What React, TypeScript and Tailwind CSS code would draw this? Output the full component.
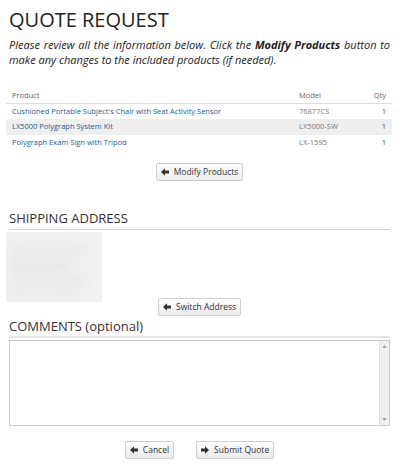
import React from "react";

const font = { fontFamily: '"Open Sans", "Liberation Sans", sans-serif' };

function ArrowIcon({ dir }: { dir: "left" | "right" }) {
  return (
    <svg width="8" height="8" viewBox="0 0 8 8" className={dir === "right" ? "rotate-180" : ""}>
      <path d="M0 4 L4 0.3 L4 2.6 L8 2.6 L8 5.4 L4 5.4 L4 7.7 Z" fill="#333" />
    </svg>
  );
}

function Btn({ label, dir = "left" }: { label: string; dir?: "left" | "right" }) {
  return (
    <button className="flex items-center gap-[5px] h-[18px] px-[4px] border border-[#cfcfcf] rounded-[2px] bg-gradient-to-b from-white to-[#ebebeb] text-[8.5px] text-[#333] leading-none">
      <ArrowIcon dir={dir} />
      {label}
    </button>
  );
}

const items = [
  { name: "Cushioned Portable Subject's Chair with Seat Activity Sensor", model: "76877CS", qty: 1 },
  { name: "LX5000 Polygraph System Kit", model: "LX5000-SW", qty: 1 },
  { name: "Polygraph Exam Sign with Tripod", model: "LX-1595", qty: 1 },
];

export default function App() {
  return (
    <div className="bg-white w-[400px] h-[468px] overflow-hidden pl-[9px] pr-[10px] pt-[6px] text-[#222]" style={font}>
      {/* heading */}
      <h1 className="text-[20px] leading-[27px] font-normal">QUOTE REQUEST</h1>
      <p className="mt-[4px] italic text-[11px] leading-[15px] text-justify text-[#222]">
        Please review all the information below. Click the <b>Modify Products</b> button to make any changes to the included products (if needed).
      </p>

      {/* products */}
      <table className="-mx-[3px] w-[386px] mt-[21px] text-[7.5px] border-collapse">
        <thead>
          <tr className="border-b border-[#ddd] text-[#666]">
            <th className="text-left font-normal px-[6px] h-[15px]">Product</th>
            <th className="text-left font-normal px-[6px] w-[59px]">Model</th>
            <th className="text-right font-normal px-[6px] w-[40px]">Qty</th>
          </tr>
        </thead>
        <tbody>
          {items.map((it, i) => (
            <tr key={it.model} className={i % 2 === 1 ? "bg-[#efefef]" : ""}>
              <td className="px-[6px] h-[16px] text-[#1e5a97]">{it.name}</td>
              <td className="px-[6px] text-[#777] whitespace-nowrap">{it.model}</td>
              <td className="px-[6px] text-right text-[#555]">{it.qty}</td>
            </tr>
          ))}
        </tbody>
      </table>

      <div className="flex justify-center mt-[12px]">
        <Btn label="Modify Products" />
      </div>

      {/* shipping */}
      <h2 className="mt-[28px] text-[13px] leading-[18px] text-[#333] border-b border-[#d5d5d5] pb-[2px]">SHIPPING ADDRESS</h2>
      <div className="-ml-[3px] mt-[2px] w-[96px] h-[70px] bg-[#f2f2f2] overflow-hidden flex flex-col gap-[6px] pt-[12px] pl-[4px]">
        <div className="w-[80px] h-[10px] bg-[#e9e9e9] blur-[6px]" />
        <div className="w-[60px] h-[10px] bg-[#e6e6e6] blur-[6px]" />
        <div className="w-[78px] h-[10px] bg-[#e8e8e8] blur-[6px]" />
        <div className="w-[66px] h-[10px] bg-[#eaeaea] blur-[6px]" />
      </div>
      <div className="flex justify-center -mt-[4px]">
        <Btn label="Switch Address" />
      </div>

      {/* comments */}
      <h2 className="mt-[1px] text-[13px] leading-[18px] text-[#333] border-b-2 border-[#e5e5e5] pb-[1px]">COMMENTS (optional)</h2>
      <div className="mt-[2px] flex h-[86px] border border-[#ccc]">
        <textarea className="flex-1 resize-none outline-none" />
        <div className="w-[10px] bg-[#f0f0f0] border-l border-[#e0e0e0] flex flex-col justify-between items-center py-[4px]">
          <svg width="5" height="3" viewBox="0 0 5 3"><path d="M0 3 L2.5 0 L5 3 Z" fill="#aaa" /></svg>
          <svg width="5" height="3" viewBox="0 0 5 3"><path d="M0 0 L2.5 3 L5 0 Z" fill="#aaa" /></svg>
        </div>
      </div>

      <div className="flex justify-center gap-[22px] mt-[15px]">
        <Btn label="Cancel" />
        <Btn label="Submit Quote" dir="right" />
      </div>
    </div>
  );
}
